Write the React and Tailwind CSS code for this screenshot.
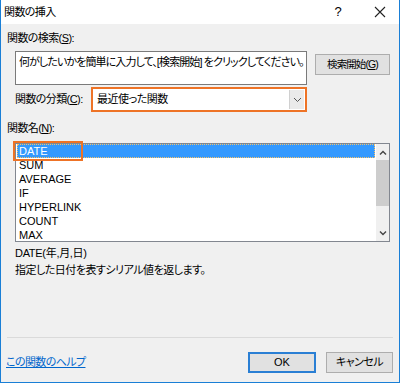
import React from "react";

const items = ["DATE", "SUM", "AVERAGE", "IF", "HYPERLINK", "COUNT", "MAX"];

function Key({ k }) {
  return (
    <>
      (<span className="underline underline-offset-1">{k}</span>)
    </>
  );
}

export default function App() {
  return (
    <div className="w-[400px] h-[383px] flex flex-col border-x border-b border-[#1a7fd6] bg-[#f0f0f0] text-black font-['Liberation_Sans','Noto_Sans_CJK_JP',sans-serif] text-[11px] [font-feature-settings:'palt']">
      {/* Title bar */}
      <div className="h-[24px] bg-white flex items-center shrink-0">
        <span className="pl-[3px] tracking-[-0.6px] text-[11px]">関数の挿入</span>
        <span className="ml-auto w-[14px] text-center text-[13px] mr-[29px]">?</span>
        <svg width="12" height="12" viewBox="0 0 12 12" className="mr-[13px]">
          <path d="M1 1 L11 11 M11 1 L1 11" stroke="#222" strokeWidth="1.1" />
        </svg>
      </div>

      {/* Body */}
      <div className="flex-1 flex flex-col">
        <div className="mt-[7px] ml-[6px] h-[14px] leading-[14px] tracking-[-0.6px]">
          関数の検索<Key k="S" />:
        </div>

        <div className="mt-[6px] ml-[14px] flex">
          <div className="w-[292px] h-[34px] bg-white border border-[#7a7a7a] pl-[3px] pt-[4px] leading-[12px] whitespace-nowrap overflow-hidden tracking-[-0.9px]">
            何がしたいかを簡単に入力して、[検索開始] をクリックしてください。
          </div>
          <button className="ml-[8px] mt-[3px] w-[75px] h-[21px] px-0 bg-[#e1e1e1] border border-[#adadad] leading-[19px] text-[10.5px] tracking-[-0.9px] whitespace-nowrap">
            検索開始<Key k="G" />
          </button>
        </div>

        <div className="mt-[2px] ml-[14px] flex items-center h-[25px]">
          <span className="w-[76px] tracking-[-0.6px]">
            関数の分類<Key k="C" />:
          </span>
          <div className="w-[216px] h-[25px] border-2 border-[#ee7326] bg-white flex items-stretch">
            <span className="flex-1 pl-[4px] leading-[21px] tracking-[-0.5px]">最近使った関数</span>
            <span className="w-[15px] m-[1px] bg-[#eaeaea] border-l border-[#d0d0d0] flex items-center justify-center">
              <svg width="9" height="6" viewBox="0 0 9 6">
                <path d="M1 1 L4.5 4.5 L8 1" fill="none" stroke="#555" strokeWidth="1" />
              </svg>
            </span>
          </div>
        </div>

        <div className="mt-[9px] ml-[6px] h-[14px] leading-[14px] tracking-[-0.6px]">
          関数名<Key k="N" />:
        </div>

        <div className="mt-[8px] ml-[14px] w-[375px] h-[99px] bg-white border border-[#828790] flex relative">
          <div className="flex-1 pl-[1px] pr-[1px]">
            {items.map((it, i) => (
              <div
                key={it}
                className={
                  i === 0
                    ? "h-[14px] leading-[14px] pl-[2px] bg-[#3399ff] text-white outline-1 outline-dotted outline-[#f5c26b] -outline-offset-1"
                    : "h-[14px] leading-[14px] pl-[2px]"
                }
              >
                {it}
              </div>
            ))}
          </div>
          <div className="w-[13px] bg-[#f0f0f0] flex flex-col items-center">
            <div className="h-[16px] flex items-center justify-center">
              <svg width="8" height="5" viewBox="0 0 8 5">
                <path d="M1 4.5 L4 1.5 L7 4.5" fill="none" stroke="#444" strokeWidth="1.4" />
              </svg>
            </div>
            <div className="w-full h-[46px] bg-[#cdcdcd]" />
            <div className="flex-1" />
            <div className="h-[16px] flex items-center justify-center">
              <svg width="8" height="5" viewBox="0 0 8 5">
                <path d="M1 0.5 L4 3.5 L7 0.5" fill="none" stroke="#444" strokeWidth="1.4" />
              </svg>
            </div>
          </div>
          {/* highlight around DATE */}
          <div className="absolute left-[-3px] top-[-3px] w-[70px] h-[20px] border-2 border-[#ee7326]" />
        </div>

        <div className="mt-[4px] ml-[14px] h-[14px] leading-[14px] tracking-[-0.3px]">DATE(年,月,日)</div>
        <div className="mt-[3px] ml-[14px] h-[14px] leading-[14px] tracking-[-0.5px]">
          指定した日付を表すシリアル値を返します。
        </div>

        <div className="flex-1" />
        <div className="mx-[6px] border-t border-[#dadada]" />

        <div className="mt-[14px] mb-[9px] flex items-center h-[21px]">
          <a href="#" className="ml-[5px] text-[#0066cc] underline tracking-[-0.6px]">
            この関数のヘルプ
          </a>
          <button className="ml-auto w-[68px] h-[21px] bg-[#e1e1e1] border-2 border-[#2a7fd4]">OK</button>
          <button className="ml-[10px] mr-[6px] w-[67px] h-[21px] bg-[#e1e1e1] border border-[#adadad] tracking-[-0.5px]">
            キャンセル
          </button>
        </div>
      </div>
    </div>
  );
}
